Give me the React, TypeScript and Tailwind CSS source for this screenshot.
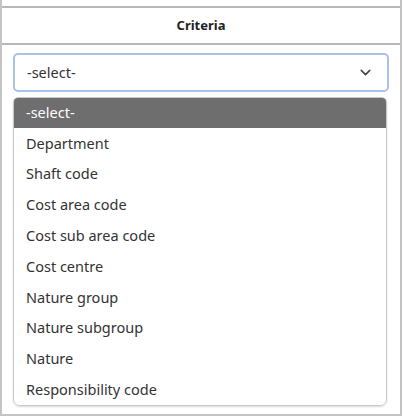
import { ChevronDown } from "lucide-react";

const options = [
  "-select-",
  "Department",
  "Shaft code",
  "Cost area code",
  "Cost sub area code",
  "Cost centre",
  "Nature group",
  "Nature subgroup",
  "Nature",
  "Responsibility code",
];

function App() {
  return (
    <div className="h-[418px] w-[404px] bg-white font-['Noto_Sans',sans-serif] text-[#222]">
      <div className="h-[416px] w-[402px] border-x-2 border-b-2 border-[#c4c4c4] pt-[6px]">
        <div className="flex h-[39px] items-center justify-center border-y-2 border-[#b8b8b8] text-[13px] font-bold text-[#222]">
          Criteria
        </div>
        <div className="px-[11px] pt-[8px]">
          <div className="flex h-[39px] items-center justify-between rounded-[5px] border-2 border-[#a9c2ea] bg-white pl-[12px] pr-[13px] text-[14.5px] text-[#333]">
            <span>-select-</span>
            <ChevronDown className="h-[17px] w-[17px] text-[#444]" strokeWidth={2.2} />
          </div>
          <div className="mt-[5px] mr-[2px] overflow-hidden rounded-b-[7px] rounded-t-[5px] border border-[#c8c8c8] shadow-[0_1px_2px_rgba(0,0,0,0.15)]">
            {options.map((o, i) => (
              <div
                key={o}
                className={
                  i === 0
                    ? "flex h-[30px] items-center bg-[#6e6e6e] pl-[12px] text-[14.5px] text-white"
                    : "flex h-[30.8px] items-center bg-white pl-[12px] text-[14.5px] text-[#333]"
                }
              >
                {o}
              </div>
            ))}
          </div>
        </div>
      </div>
    </div>
  );
}

export default App;
